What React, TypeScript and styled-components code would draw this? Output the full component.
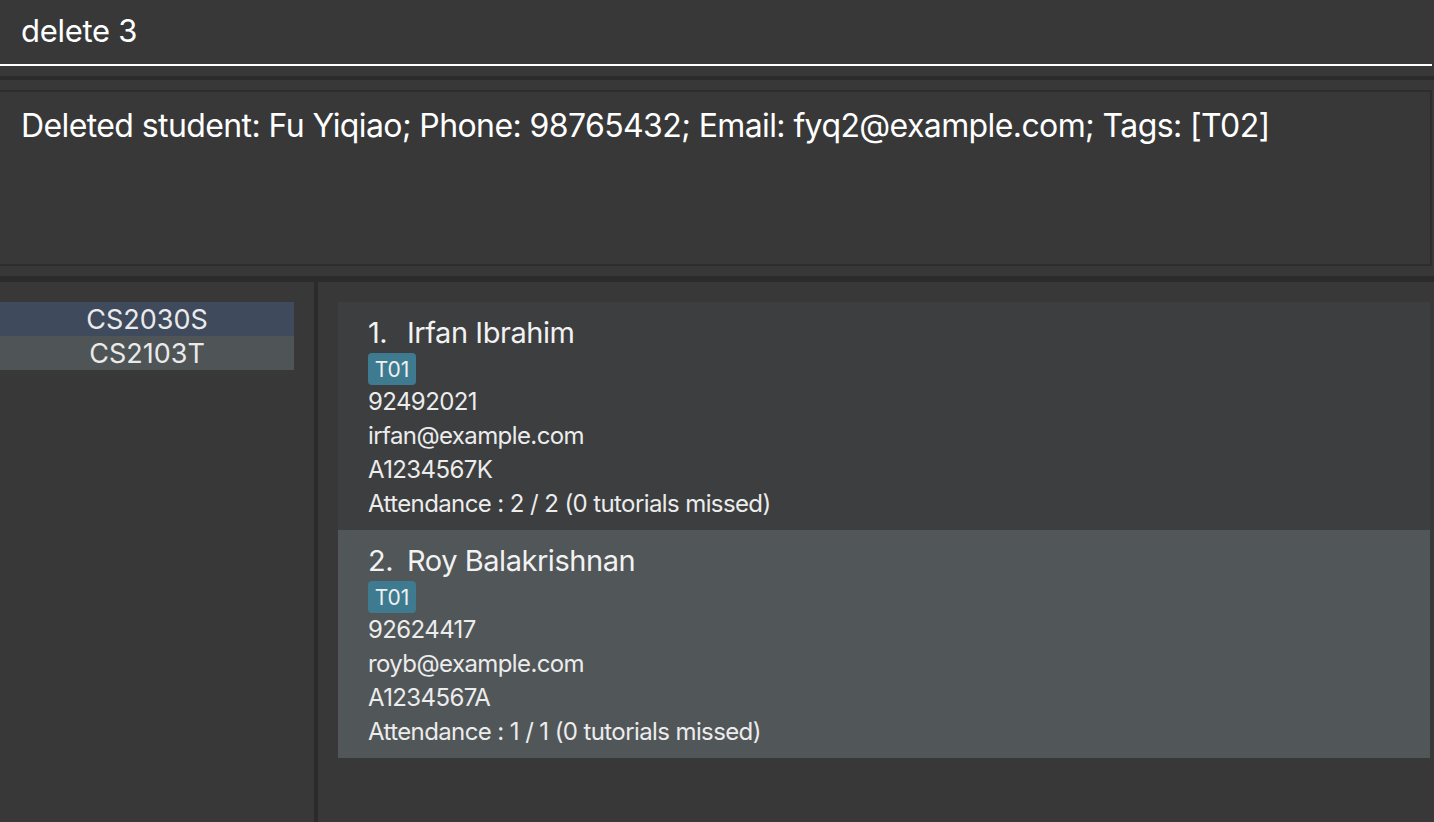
import React from "react";
import styled, { createGlobalStyle } from "styled-components";

const Global = createGlobalStyle`
  html, body { margin: 0; padding: 0; background: #383838; overflow: hidden; }
  body { font-family: Inter, "Noto Sans", sans-serif; color: #fff; }
`;

const Page = styled.div`
  width: 1434px;
  height: 822px;
  display: flex;
  flex-direction: column;
  background: #383838;
`;

const CommandBox = styled.div`
  width: 1432px;
  height: 66px;
  box-sizing: border-box;
  border-bottom: 2px solid #ffffff;
  display: flex;
  align-items: center;
  padding: 0 0 4px 21px;
  font-size: 31px;
  letter-spacing: -0.3px;
`;

const Divider = styled.div<{ $top: number; $h: number; $bottom: number }>`
  margin-top: ${(p) => p.$top}px;
  margin-bottom: ${(p) => p.$bottom}px;
  height: ${(p) => p.$h}px;
  background: #2b2b2b;
  flex-shrink: 0;
`;

const ResultBox = styled.div`
  width: 1432px;
  height: 176px;
  box-sizing: border-box;
  border: 2px solid #2d2d2d;
  border-left: none;
  padding: 14px 0 0 21px;
  font-size: 32px;
  letter-spacing: -0.6px;
`;

const Main = styled.div`
  flex: 1;
  display: flex;
  min-height: 0;
`;

const ModulePanel = styled.div`
  width: 314px;
  padding-top: 20px;
  box-sizing: border-box;
`;

const ModuleCell = styled.div<{ $selected?: boolean }>`
  width: 294px;
  height: 34px;
  display: flex;
  align-items: center;
  justify-content: center;
  font-size: 27px;
  color: #eaeaea;
  background: ${(p) => (p.$selected ? "#3f4a5c" : "#4f5456")};
`;

const VDivider = styled.div`
  width: 4px;
  background: #2b2b2b;
`;

const StudentPanel = styled.div`
  flex: 1;
  padding: 20px 4px 0 20px;
  display: flex;
  flex-direction: column;
`;

const Card = styled.div<{ $alt?: boolean }>`
  height: 228px;
  box-sizing: border-box;
  background: ${(p) => (p.$alt ? "#515658" : "#3c3e3f")};
  padding: 12px 0 0 30px;
  display: flex;
  flex-direction: column;
  align-items: flex-start;
`;

const Name = styled.div`
  display: flex;
  font-size: 29px;
  height: 38px;
  line-height: 38px;
  color: #f2f2f2;
  letter-spacing: -0.45px;
`;

const Index = styled.span`
  width: 39px;
`;

const Tag = styled.span`
  margin-top: 1px;
  height: 32px;
  width: 48px;
  box-sizing: border-box;
  border-radius: 4px;
  background: #3e7b91;
  color: #f0f0f0;
  font-size: 21px;
  display: flex;
  align-items: center;
  justify-content: center;
`;

const Detail = styled.div`
  font-size: 24px;
  height: 34px;
  line-height: 34px;
  color: #ececec;
  letter-spacing: -0.6px;
`;

const students = [
  { name: "Irfan Ibrahim", tag: "T01", phone: "92492021", email: "irfan@example.com", id: "A1234567K", att: "Attendance : 2 / 2 (0 tutorials missed)" },
  { name: "Roy Balakrishnan", tag: "T01", phone: "92624417", email: "royb@example.com", id: "A1234567A", att: "Attendance : 1 / 1 (0 tutorials missed)" },
];

export default function App() {
  return (
    <>
      <Global />
      <Page>
        <CommandBox>delete 3</CommandBox>
        <Divider $top={10} $h={4} $bottom={10} />
        <ResultBox>
          Deleted student: Fu Yiqiao; Phone: 98765432; Email: fyq2@example.com; Tags: [T02]
        </ResultBox>
        <Divider $top={10} $h={6} $bottom={0} />
        <Main>
          <ModulePanel>
            <ModuleCell $selected>CS2030S</ModuleCell>
            <ModuleCell>CS2103T</ModuleCell>
          </ModulePanel>
          <VDivider />
          <StudentPanel>
            {students.map((s, i) => (
              <Card key={s.name} $alt={i % 2 === 1}>
                <Name>
                  <Index>{`${i + 1}.`}</Index>
                  <span>{s.name}</span>
                </Name>
                <Tag>{s.tag}</Tag>
                <Detail>{s.phone}</Detail>
                <Detail>{s.email}</Detail>
                <Detail>{s.id}</Detail>
                <Detail>{s.att}</Detail>
              </Card>
            ))}
          </StudentPanel>
        </Main>
      </Page>
    </>
  );
}
